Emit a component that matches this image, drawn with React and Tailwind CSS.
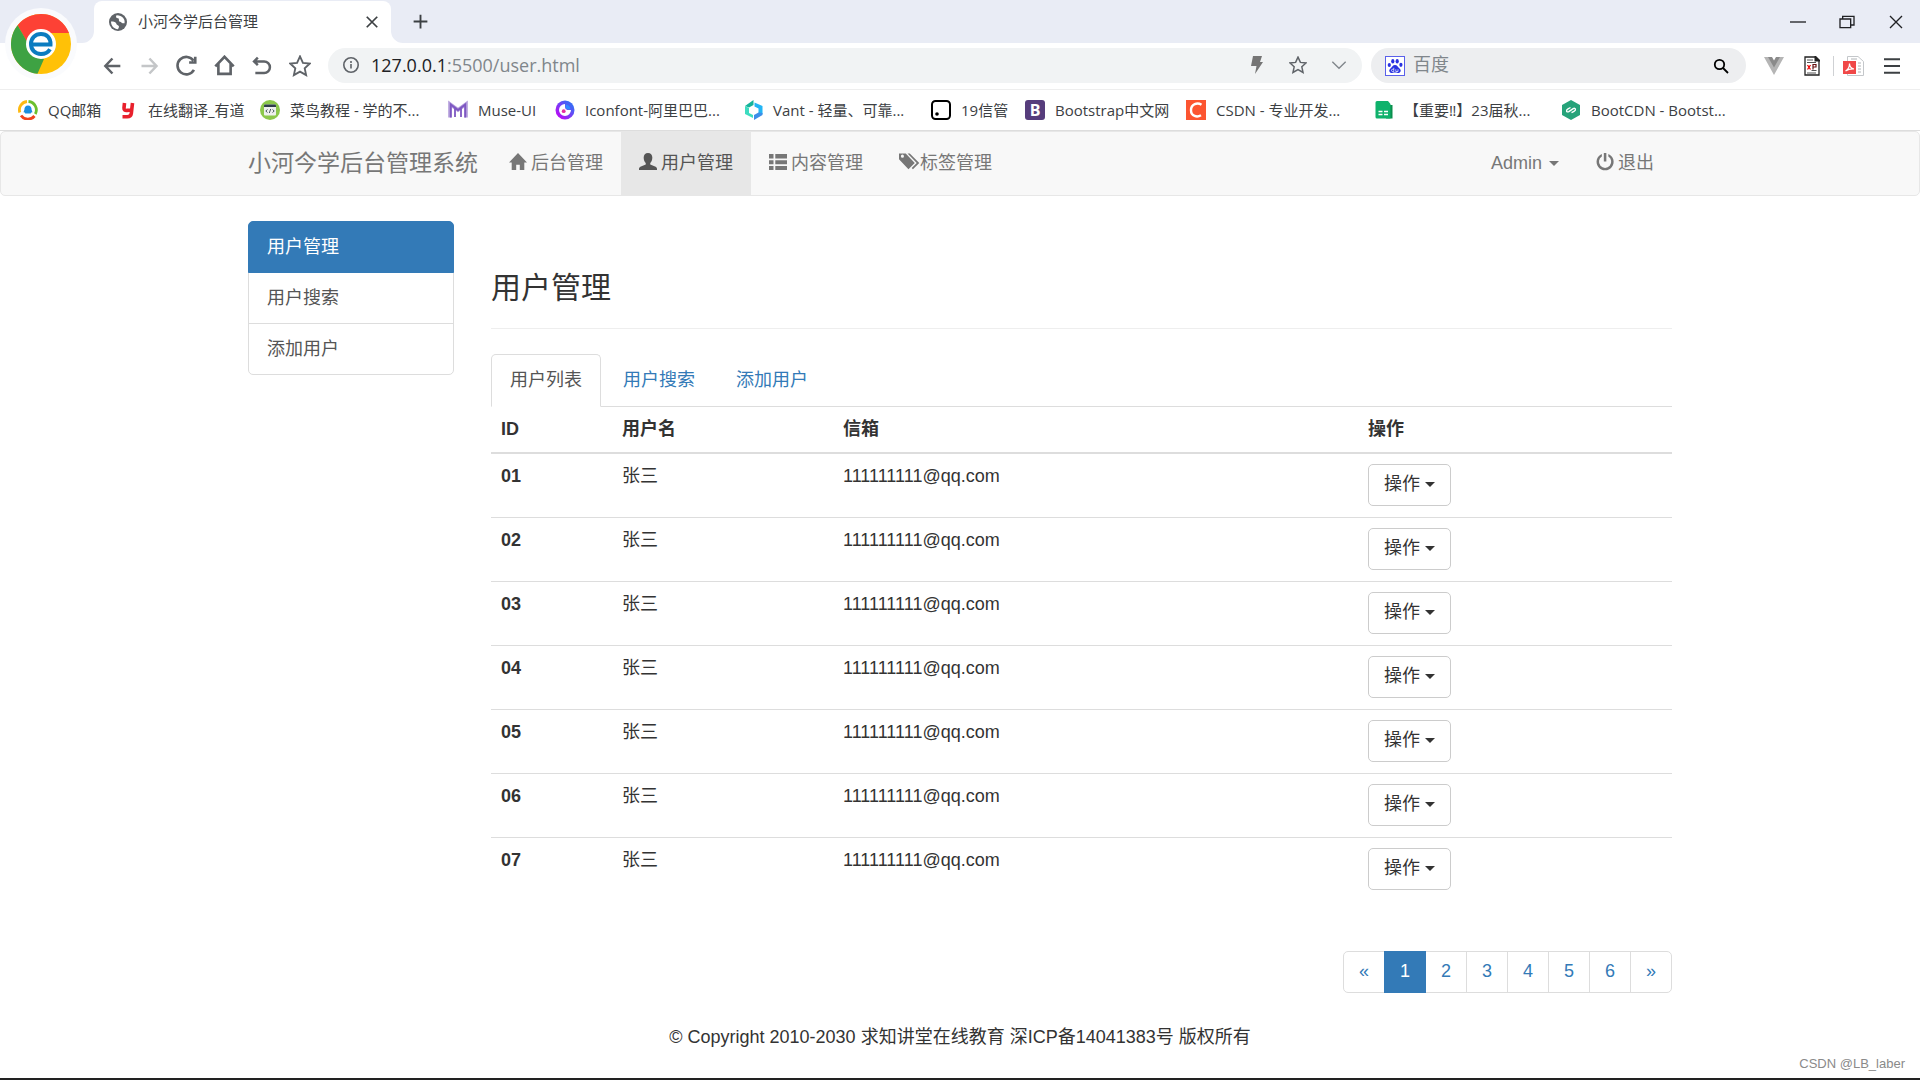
import { useState } from "react";

const bookmarks = [
  { label: "QQ邮箱", icon: QQMailIcon, width: "w-[100px]" },
  { label: "在线翻译_有道", icon: YoudaoIcon, width: "w-[142px]" },
  { label: "菜鸟教程 - 学的不...", icon: RunoobIcon, width: "w-[188px]" },
  { label: "Muse-UI", icon: MuseIcon, width: "w-[107px]" },
  { label: "Iconfont-阿里巴巴...", icon: IconfontIcon, width: "w-[188px]" },
  { label: "Vant - 轻量、可靠...", icon: VantIcon, width: "w-[188px]" },
  { label: "19信管", icon: NotionIcon, width: "w-[94px]" },
  { label: "Bootstrap中文网", icon: BootstrapIcon, width: "w-[161px]" },
  { label: "CSDN - 专业开发...", icon: CsdnIcon, width: "w-[188px]" },
  { label: "【重要‼】23届秋...", icon: SheetIcon, width: "w-[187px]" },
  { label: "BootCDN - Bootst...", icon: BootCdnIcon, width: "w-[187px]" },
];

const users = ["01", "02", "03", "04", "05", "06", "07"].map((id) => ({
  id,
  name: "张三",
  email: "111111111@qq.com",
}));

const sideLinks = ["用户管理", "用户搜索", "添加用户"];
const tabs = ["用户列表", "用户搜索", "添加用户"];
const pages = ["«", "1", "2", "3", "4", "5", "6", "»"];

/* ---------- bookmark icons ---------- */

function QQMailIcon() {
  return (
    <svg viewBox="0 0 20 20" className="size-5">
      <g fill="none" strokeWidth="2.800">
        <path d="M1.800 12.500A8.500 8.500 0 0 1 9 1.500" stroke="#fdb913" />
        <path d="M10.500 1.500a8.500 8.500 0 0 1 6.800 12.500" stroke="#6cc02d" />
        <path d="M3 15.500a8.500 8.500 0 0 0 13.500.5" stroke="#f0431e" />
      </g>
      <path d="M10 5.500c2.500 0 3.600 2 3.600 4.200l.9 2.500-1.300.4-.4 1H7.200l-.4-1-1.300-.4.9-2.500c0-2.200 1.100-4.200 3.600-4.200z" fill="#1b8ee0" />
    </svg>
  );
}

function YoudaoIcon() {
  return (
    <svg viewBox="0 0 20 20" className="size-5">
      <path d="M6.500 3 6 8c-.1 2 1 2.600 3 2.400L13.500 10M14.500 3l-1.200 10.500c-.3 2.300-1.600 3.200-4 3.200H4.500" fill="none" stroke="#e8202c" strokeWidth="3.600" />
    </svg>
  );
}

function RunoobIcon() {
  return (
    <svg viewBox="0 0 20 20" className="size-5">
      <circle cx="10" cy="10" r="10" fill="#8cc84b" />
      <rect x="4" y="4.500" width="12" height="11" rx="1" fill="#eef0ee" />
      <path d="M4 5.500a1 1 0 0 1 1-1h10a1 1 0 0 1 1 1V7H4z" fill="#2f3e4a" />
      <path d="M7.500 9.500 5.800 11l1.700 1.500M12.500 9.500l1.700 1.500-1.700 1.500M10.700 9l-1.400 4" fill="none" stroke="#4a5a60" />
    </svg>
  );
}

function MuseIcon() {
  return (
    <svg viewBox="0 0 20 20" className="size-5" fill="none">
      <path d="M2 17.500V4l8 6 8-6v13.500" stroke="#b39ddb" strokeWidth="3.600" />
      <path d="M2.800 17.500V4.500L10 10l7.200-5.500v13M7 17V8.500M13 17V8.500" stroke="#7e57c2" strokeWidth="1.800" />
    </svg>
  );
}

function IconfontIcon() {
  return (
    <svg viewBox="0 0 20 20" className="size-5">
      <defs>
        <linearGradient id="iconfont" x1="0" y1="1" x2="1" y2="0">
          <stop offset="0.2" stopColor="#b012f5" />
          <stop offset="0.8" stopColor="#3a6af5" />
        </linearGradient>
      </defs>
      <circle cx="10" cy="10" r="9.500" fill="url(#iconfont)" />
      <path d="M10 4a6 6 0 1 0 6 6h-3.500A3 3 0 0 1 10 7z" fill="#fff" />
      <path d="M10.500 4.500a5.500 5.500 0 0 1 5 5H13a3 3 0 0 1-2.500-2.500z" fill="#2f8bff" />
      <circle cx="8.700" cy="11.200" r="1.900" fill="#e62ea0" />
    </svg>
  );
}

function VantIcon() {
  return (
    <svg viewBox="0 0 20 20" className="size-5">
      <path d="M10.500 0v5L6 7.500 2 6z" fill="#16b39a" />
      <path d="M2 6l4 2v5l4 2v3l-8-4z" fill="#3ddcc0" />
      <path d="M11.500 2.500 19.500 6v8l-4 1.500V8.500l-4-2z" fill="#22b5f5" />
      <path d="M11 20v-5l4.500-2.500 4 .5v2z" fill="#3c8ee8" />
    </svg>
  );
}

function NotionIcon() {
  return (
    <svg viewBox="0 0 20 20" className="size-5">
      <rect x="1" y="1" width="18" height="18" rx="3.500" fill="#fff" stroke="#000" strokeWidth="2" />
      <circle cx="6" cy="14" r="1.800" />
    </svg>
  );
}

function BootstrapIcon() {
  return (
    <span className="flex size-5 items-center justify-center rounded-[3px] bg-[#563d7c] text-base font-bold leading-5 text-white">
      B
    </span>
  );
}

function CsdnIcon() {
  return (
    <svg viewBox="0 0 20 20" className="size-5">
      <path d="M0 0h20v20H0z" fill="#fc5531" />
      <path d="M15.500 4.800C11.500 2.200 5 3.800 5 10.300c0 6.200 6.200 7.200 10 5" fill="none" stroke="#fff" strokeWidth="2.400" />
    </svg>
  );
}

function SheetIcon() {
  return (
    <svg viewBox="0 0 20 20" className="size-5">
      <path d="M14 5h4.500v13.500H12z" fill="#0a8f4d" />
      <path d="M3 1h11l2.500 3v14.500H3A1.500 1.500 0 0 1 1.500 17V2.500A1.500 1.500 0 0 1 3 1z" fill="#0fb26c" />
      <path d="M4.500 11.500h4M10 11.500h4M4.500 14.500h4M10 14.500h4" stroke="#fff" strokeWidth="1.500" />
    </svg>
  );
}

function BootCdnIcon() {
  return (
    <svg viewBox="0 0 20 20" className="size-5">
      <path d="m10 0 9 5v10l-9 5-9-5V5z" fill="#26a37a" />
      <path d="M9.500 7.500 7 8.800c-2.500 1.400-1.500 4 .8 2.800l4.400-3c2.300-1.200 3.300 1.400.8 2.700l-2.500 1.300" fill="none" stroke="#fff" strokeWidth="1.400" />
    </svg>
  );
}

/* ---------- browser icons ---------- */

function BrowserLogo() {
  return (
    <svg viewBox="0 0 72 72" className="absolute left-[5px] top-2 size-[72px]" aria-hidden="true">
      <circle cx="36" cy="36" r="36" fill="#fafbfd" />
      <circle cx="36" cy="36" r="30" fill="#ffc107" />
      <path d="M12.600 17.200A30 30 0 0 1 64 25H36L21.500 33z" fill="#fd4135" />
      <path d="M12.600 17.200 22 33.500 29 47.500l10 3.500-6.500 14.800A30 30 0 0 1 12.600 17.200z" fill="#3ea243" />
      <circle cx="36" cy="36" r="15" fill="#fff" />
      <path d="M26 36.500h19.500c.3-7-4-10.500-9.500-10.500-6 0-10 4.300-10 10s4 10 10 10c4 0 7-1.500 9-4.800" fill="none" stroke="#0b7cc0" strokeWidth="4" />
    </svg>
  );
}

function StrokeIcon({ className, d, width = 2 }) {
  return (
    <svg
      viewBox="0 0 24 24"
      className={className}
      fill="none"
      stroke="currentColor"
      strokeWidth={width}
      aria-hidden="true"
    >
      <path d={d} />
    </svg>
  );
}

const icons = {
  back: "M22 12H4M12.500 3 4 12l8.500 9",
  forward: "M3 12h18M12.500 3l8.500 9-8.500 9",
  reload: "M20.500 17A10 10 0 1 1 20 6.500M22 2v6.500h-7",
  home: "M1.500 13 12 2l10.500 11M5 10v11.500h14V10",
  undo: "M7 2 2.500 6.500 7 11M2.500 6.500H14.500a7 7 0 0 1 0 14H4",
  star: "m12 1.500 3.200 7 7.500.8-5.600 5.100 1.600 7.500-6.700-3.800-6.700 3.800 1.600-7.500L1.300 9.300l7.500-.8z",
  chevron: "m2 7 10 10L22 7",
  close: "M3 3l18 18M21 3 3 21",
  plus: "M12 1v22M1 12h22",
  minus: "M0 12h24",
  restore: "M1.500 7.500h16v13h-16zM5.500 7.500v-4h17v13h-5",
  menu: "M0 2h24M0 12h24M0 22h24",
};

const navIcons = {
  home: "M10 0 20 10.500h-3V19h-5v-6H8v6H3v-8.500H0z",
  user: "M10 0c3 0 4.800 2.200 4.800 5 0 2.600-.9 4.800-2.300 6v1.700l6 2.600c1 .5 1.500 1.200 1.500 2.700v1H0v-1c0-1.500.5-2.200 1.500-2.700l6-2.600V11C6.100 9.800 5.200 7.600 5.200 5c0-2.800 1.800-5 4.800-5z",
  list: "M0 1h5v5H0zM7 1h13v5H7zM0 8h5v4.500H0zM7 8h13v4.500H7zM0 14.500h5V19H0zM7 14.500h13V19H7z",
  tags: "M0 .5V7l10.500 11 7-7L7.500.5zm3.800 1.300a1.700 1.700 0 1 1 0 3.400 1.700 1.700 0 0 1 0-3.400zM9.500.5H12L22.500 11l-7 7-1.400-1.300 5.600-5.700z",
  off: "M8.700 0h2.800v9.500H8.700zM6.500 1v3a6.800 6.800 0 1 0 7.200 0V1a9.500 9.500 0 1 1-7.200 0z",
};

function NavIcon({ name }) {
  return (
    <svg viewBox="0 0 20 20" className="mb-[3px] size-[18px] overflow-visible" fill="currentColor" fillRule="evenodd" aria-hidden="true">
      <path d={navIcons[name]} />
    </svg>
  );
}

function Caret() {
  return <span className="border-x-5 border-t-5 border-x-transparent border-t-current" />;
}

/* ---------- browser frame ---------- */

function TabStrip() {
  return (
    <div className="flex h-[43px] items-end bg-[#e9ecf5] pl-[82px] text-[#3c4043]">
      <svg viewBox="0 0 12 12" className="size-3" fill="#fff" aria-hidden="true">
        <path d="M12 0v12H0A12 12 0 0 0 12 0z" />
      </svg>
      <div className="flex h-[42px] w-[297px] items-center rounded-t-lg bg-white pb-px pl-[15px] pr-3">
        <svg viewBox="0 0 18 18" className="size-[18px]" aria-hidden="true">
          <circle cx="9" cy="9" r="9" fill="#5f6368" />
          <path d="M2 8.500c3 0 5 .5 5.500 2.500.3 1.500 2.500 1 2.500 3l-1 2.200C5 16 2 13 2 8.500zM7.500 2.200C6.500 4 7 5 9 5.200c1.800.2 0 3 2 3.500 1.500.3 2 2 4.500 1.500C16.500 6 13 2 7.500 2.200z" fill="#fff" />
        </svg>
        <span className="ml-[11px] flex-1 text-[15px]">小河今学后台管理</span>
        <button type="button" aria-label="关闭标签页">
          <StrokeIcon d={icons.close} className="size-[14px]" width={3} />
        </button>
      </div>
      <svg viewBox="0 0 12 12" className="size-3" fill="#fff" aria-hidden="true">
        <path d="M0 0v12h12A12 12 0 0 1 0 0z" />
      </svg>
      <button type="button" aria-label="新标签页" className="mb-[14px] ml-[10px]">
        <StrokeIcon d={icons.plus} className="size-[15px]" width={3} />
      </button>
      <div className="ml-auto flex h-full items-center gap-[33px] pr-4 text-[#202124]">
        <button type="button" aria-label="最小化">
          <StrokeIcon d={icons.minus} className="size-4" />
        </button>
        <button type="button" aria-label="还原">
          <StrokeIcon d={icons.restore} className="size-4" />
        </button>
        <button type="button" aria-label="关闭">
          <StrokeIcon d={icons.close} className="size-4" />
        </button>
      </div>
    </div>
  );
}

function Toolbar() {
  return (
    <div className="flex h-[47px] items-center border-b border-[#eeeeee] pb-px pl-[102px] pr-[20px] text-[#5f6368]">
      <div className="flex items-center gap-[17px]">
        <button type="button" aria-label="后退">
          <StrokeIcon d={icons.back} className="size-5" width={3} />
        </button>
        <button type="button" aria-label="前进" className="text-[#c4c6c8]">
          <StrokeIcon d={icons.forward} className="size-5" width={3} />
        </button>
        <button type="button" aria-label="刷新">
          <StrokeIcon d={icons.reload} className="size-[21px]" width={3} />
        </button>
        <button type="button" aria-label="主页">
          <StrokeIcon d={icons.home} className="size-[21px]" width={3} />
        </button>
        <button type="button" aria-label="恢复">
          <StrokeIcon d={icons.undo} className="size-5" width={3} />
        </button>
        <button type="button" aria-label="收藏">
          <StrokeIcon d={icons.star} className="size-[22px]" />
        </button>
      </div>

      <div className="ml-[17px] flex h-[35px] flex-1 items-center rounded-full bg-[#f1f3f4] pb-px pl-[15px] pr-[15px]">
        <svg viewBox="0 0 16 16" className="size-4" fill="none" stroke="currentColor" strokeWidth="1.600" aria-hidden="true">
          <circle cx="8" cy="8" r="7.200" />
          <path d="M8 7v4.500M8 4v2" />
        </svg>
        <label htmlFor="address" className="ml-3 pb-px text-lg leading-6 text-[#202124]">
          127.0.0.1
        </label>
        <input
          id="address"
          defaultValue=":5500/user.html"
          className="min-w-0 flex-1 bg-transparent pb-px text-lg leading-6 text-[#80868b] outline-none"
        />
        <svg viewBox="0 0 12 18" className="h-[18px] w-3" fill="#757575" aria-hidden="true">
          <path d="M2 0h9L9 6h3L4 18l1.500-8H0z" />
        </svg>
        <button type="button" aria-label="添加书签" className="ml-[26px]">
          <StrokeIcon d={icons.star} className="size-[18px]" width={2} />
        </button>
        <button type="button" aria-label="展开" className="ml-6 text-[#80868b]">
          <StrokeIcon d={icons.chevron} className="size-4" width={2} />
        </button>
      </div>

      <div className="ml-[9px] flex h-[35px] w-[375px] items-center rounded-full bg-[#edeef0] pl-[14px] pr-[17px]">
        <svg viewBox="0 0 20 20" className="size-5" fill="#2932e1" aria-hidden="true">
          <rect x="0.500" y="0.500" width="19" height="19" fill="#fff" stroke="#5a60ea" />
          <ellipse cx="4.300" cy="9" rx="1.600" ry="2.100" />
          <ellipse cx="7.800" cy="5.200" rx="1.600" ry="2.200" />
          <ellipse cx="12.200" cy="5.200" rx="1.600" ry="2.200" />
          <ellipse cx="15.900" cy="8.800" rx="1.600" ry="2.100" />
          <path d="M10 9c2.300 0 2.800 2 4.800 3.700 2 1.800.5 4.600-2 4.200-2-.4-3.600-.4-5.600 0-2.500.4-4-2.400-2-4.200C7.200 11 7.700 9 10 9z" />
          <path d="M8.800 11.800V15.500H7.600a1 1 0 0 1 0-2.200h1.200M10.800 13.300v2.200h2.200v-2.200" fill="none" stroke="#fff" strokeWidth="0.700" />
        </svg>
        <input
          aria-label="搜索"
          placeholder="百度"
          className="ml-2 min-w-0 flex-1 bg-transparent pb-[3px] text-lg leading-6 outline-none placeholder:text-[#80868b]"
        />
        <button type="button" aria-label="搜索" className="text-black">
          <svg viewBox="0 0 16 16" className="size-4" fill="none" stroke="currentColor" strokeWidth="1.800">
            <circle cx="6.500" cy="6.500" r="4.700" />
            <path d="m10 10 5 5" />
          </svg>
        </button>
      </div>

      <div className="ml-[18px] flex items-center">
        <svg viewBox="0 0 20 18" className="h-[18px] w-5" aria-hidden="true">
          <path d="M0 0h6.500L10 6l3.500-6H20L10 18z" fill="#b5b5b5" />
          <path d="M4 0h4l2 3.500L12 0h4L10 10.500z" fill="#8a8a8a" />
        </svg>
        <svg viewBox="0 0 16 20" className="ml-5 h-5 w-4" aria-hidden="true">
          <path d="M1 1h10l4 4v14H1z" fill="#fff" stroke="#222" strokeWidth="1.300" />
          <path d="M10.500 0H12l4 4v1.500h-5.500z" fill="#222" />
          <path d="M3 4h6M3 6.500h9M7.500 14.500h5M3 17h9" stroke="#555" />
          <path d="m3.500 9 3 4.500M6.500 9l-3 4.500" stroke="#e00" strokeWidth="1.300" />
          <path d="M9 13.500V8.500h3v2.500H9" fill="none" stroke="#611" strokeWidth="1.200" />
        </svg>
        <span className="ml-[13px] h-5 w-px bg-[#cfd1d4]" />
        <svg viewBox="0 0 21 20" className="ml-[9px] h-5 w-[21px]" aria-hidden="true">
          <path d="M4.500.500H15l5.500 5v14h-16z" fill="#fff" stroke="#c4c7ca" />
          <path d="M8 3h6M15 7h3M15 10h3M15 13h3M15 16h3" stroke="#b0b3b6" />
          <path d="M0 5h13v13H0z" fill="#f04848" />
          <path d="M2.500 15c2-1 4-3.500 4-7.500 0 3 2.500 5 4.500 5.500-3-.2-6 .5-8.500 2z" fill="none" stroke="#fff" strokeWidth="1.200" />
        </svg>
        <button type="button" aria-label="菜单" className="ml-5 text-[#3c4043]">
          <StrokeIcon d={icons.menu} className="size-4 overflow-visible" width={3} />
        </button>
      </div>
    </div>
  );
}

function BookmarkBar() {
  return (
    <div className="flex h-[41px] items-center overflow-hidden border-b border-[#dddddd] pl-[18px] text-[15px] text-[#3c4043]">
      {bookmarks.map(({ label, icon: Icon, width }) => (
        <a key={label} href="#" className={`flex shrink-0 items-center gap-[10px] whitespace-nowrap ${width}`}>
          <Icon />
          <span>{label}</span>
        </a>
      ))}
    </div>
  );
}

/* ---------- page ---------- */

function NavLink({ icon, label, active, tight }) {
  return (
    <a
      href="#"
      className={`flex h-full items-center px-[18px] ${tight ? "gap-[3px]" : "gap-1"} ${
        active ? "bg-[#e7e7e7] text-[#555]" : "text-[#777]"
      }`}
    >
      <NavIcon name={icon} />
      {label}
    </a>
  );
}

function Navbar() {
  return (
    <nav className="mb-[25px] h-[65px] rounded-[5px] border border-[#e7e7e7] bg-[#f8f8f8] text-[#777]">
      <div className="mx-auto flex h-full max-w-[1462px] items-center px-[19px]">
        <a href="#" className="w-[243px] text-[23px]">小河今学后台管理系统</a>
        <NavLink icon="home" label="后台管理" />
        <NavLink icon="user" label="用户管理" active />
        <NavLink icon="list" label="内容管理" />
        <NavLink icon="tags" label="标签管理" tight />
        <button type="button" className="ml-auto flex h-full items-center gap-[7px] px-[18px]">
          Admin
          <Caret />
        </button>
        <a href="#" className="flex h-full items-center gap-1 pl-[19px]">
          <NavIcon name="off" />
          <span className="pr-[18px]">退出</span>
        </a>
      </div>
    </nav>
  );
}

function Sidebar() {
  return (
    <div className="w-[206px] shrink-0">
      {sideLinks.map((label, i) => (
        <a
          key={label}
          href="#"
          className={`-mb-px block border px-[18px] py-3 leading-[26px] first:rounded-t-[5px] last:rounded-b-[5px] ${
            i === 0
              ? "relative border-[#337ab7] bg-[#337ab7] text-white"
              : "border-[#ddd] text-[#555]"
          }`}
        >
          {label}
        </a>
      ))}
    </div>
  );
}

function UserTable() {
  return (
    <table className="w-full table-fixed text-left">
      <thead>
        <tr className="border-b-2 border-[#ddd]">
          <th className="w-[121px] p-[10px]">ID</th>
          <th className="w-[221px] p-[10px]">用户名</th>
          <th className="p-[10px]">信箱</th>
          <th className="w-[314px] p-[10px]">操作</th>
        </tr>
      </thead>
      <tbody>
        {users.map((user) => (
          <tr key={user.id} className="border-t border-[#ddd] align-top">
            <th scope="row" className="p-[10px]">{user.id}</th>
            <td className="p-[10px]">{user.name}</td>
            <td className="p-[10px]">{user.email}</td>
            <td className="p-[10px]">
              <button
                type="button"
                className="mb-px flex h-[42px] items-center gap-[5px] rounded-[5px] border border-[#ccc] bg-white px-[15px] pb-px"
              >
                操作
                <Caret />
              </button>
            </td>
          </tr>
        ))}
      </tbody>
    </table>
  );
}

function Pagination() {
  const [page, setPage] = useState("1");

  return (
    <nav className="mt-[50px] flex justify-end">
      {pages.map((p) => (
        <a
          key={p}
          href="#"
          onClick={() => setPage(p)}
          className={`-ml-px border px-[15px] pb-2 pt-[7px] first:rounded-l-[5px] last:rounded-r-[5px] ${
            p === page
              ? "relative border-[#337ab7] bg-[#337ab7] text-white"
              : "border-[#ddd] text-[#337ab7]"
          }`}
        >
          {p}
        </a>
      ))}
    </nav>
  );
}

export default function App() {
  const [tab, setTab] = useState("用户列表");

  return (
    <div className="relative flex min-h-screen flex-col bg-white">
      <header className="font-['Open_Sans','Noto_Sans_CJK_SC',sans-serif]">
        <TabStrip />
        <Toolbar />
        <BookmarkBar />
        <BrowserLogo />
      </header>

      <div className="flex-1 font-['Liberation_Sans','Noto_Sans_CJK_SC',sans-serif] text-lg leading-[25px] text-[#333]">
        <Navbar />
        <div className="mx-auto flex max-w-[1462px] gap-[37px] px-[19px]">
          <Sidebar />
          <main className="min-w-0 flex-1">
            <h1 className="mb-[25px] mt-[50px] border-b border-[#eee] pb-6 text-3xl leading-[33px]">
              用户管理
            </h1>
            <div className="flex gap-[3px] border-b border-[#ddd]">
              {tabs.map((label) => (
                <button
                  key={label}
                  type="button"
                  onClick={() => setTab(label)}
                  className={`-mb-px h-[53px] rounded-t-[5px] border px-[18px] ${
                    label === tab
                      ? "border-[#ddd] border-b-white bg-white text-[#555]"
                      : "border-transparent text-[#337ab7]"
                  }`}
                >
                  {label}
                </button>
              ))}
            </div>
            <UserTable />
            <Pagination />
          </main>
        </div>
        <footer className="mb-7 mt-8 text-center">
          © Copyright 2010-2030 求知讲堂在线教育 深ICP备14041383号 版权所有
        </footer>
      </div>

      <span className="absolute bottom-2 right-[15px] font-['Liberation_Sans',sans-serif] text-[13px] leading-4 text-[#8a8a8a]">
        CSDN @LB_laber
      </span>
      <div className="h-[2px] bg-[#222]" />
    </div>
  );
}
